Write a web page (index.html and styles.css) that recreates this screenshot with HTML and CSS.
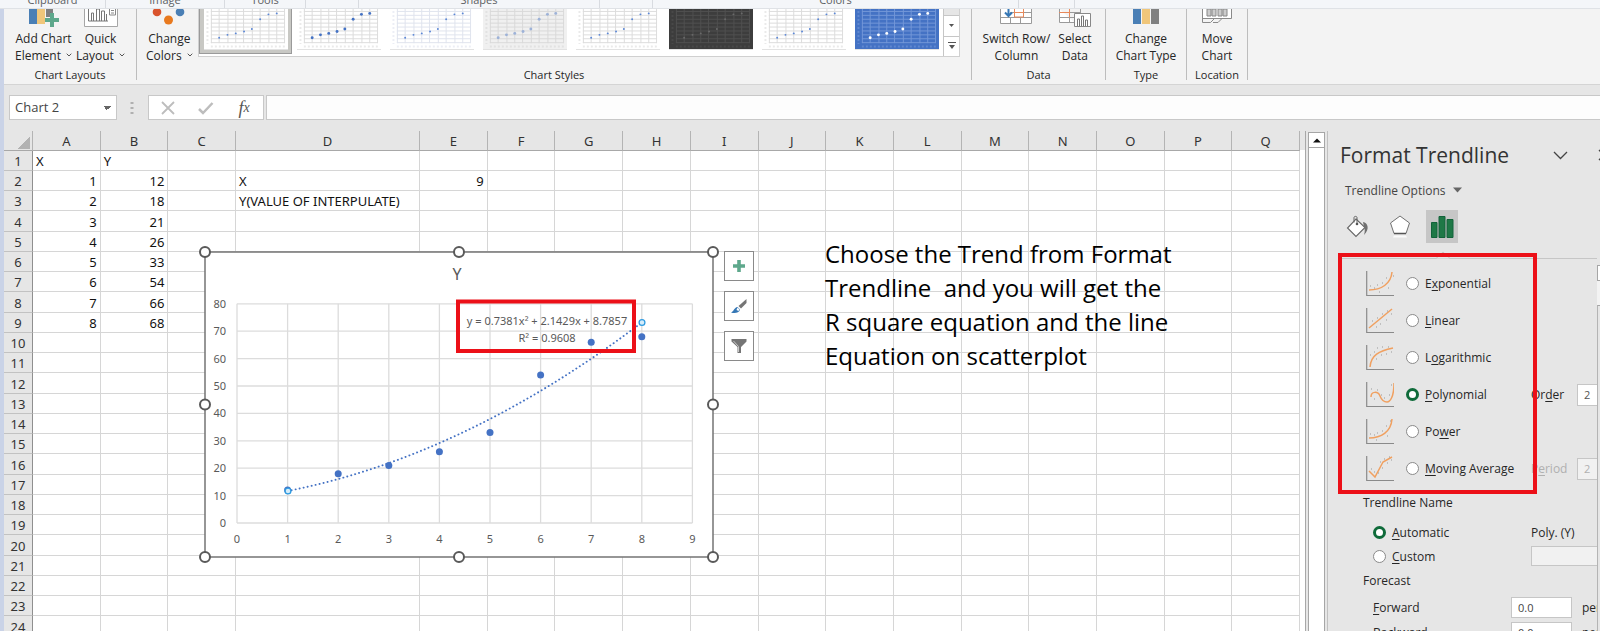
FILE: index.html
```html
<!DOCTYPE html>
<html lang="en">
<head>
<meta charset="utf-8">
<title>Chart 2 - Format Trendline</title>
<link rel="stylesheet" href="styles.css">
</head>
<body>
<svg class="defs" aria-hidden="true">
  <symbol id="thumb-grid" viewBox="0 0 84 41">
    <path d="M6.500 0V35M14.500 0V35M23.500 0V35M31.500 0V35M39.500 0V35M48.500 0V35M56.500 0V35M65.500 0V35M73.500 0V35M81.500 0V35M6 2.500H82M6 6.500H82M6 10.500H82M6 14.500H82M6 18.500H82M6 22.500H82M6 26.500H82M6 30.500H82M6 34.500H82" fill="none" stroke="currentColor"/>
    <path d="M2.500 2v34M6 38.500h76" fill="none" stroke="currentColor" stroke-width="2" stroke-dasharray="2 2.100" opacity=".6"/>
  </symbol>
  <symbol id="thumb-dots" viewBox="0 0 84 41">
    <g fill="currentColor"><circle cx="14.500" cy="29.500" r="1"/><circle cx="23" cy="26.500" r="1"/><circle cx="31.500" cy="25" r="1"/><circle cx="40" cy="23" r="1"/><circle cx="48" cy="20.500" r="1"/><circle cx="56.500" cy="10.500" r="1"/><circle cx="65" cy="5.500" r="1"/><circle cx="73.500" cy="4.500" r="1"/></g>
  </symbol>
  <symbol id="thumb-dots-bold" viewBox="0 0 84 41">
    <g fill="currentColor"><circle cx="14.500" cy="29.500" r="1.500"/><circle cx="23" cy="26.500" r="1.500"/><circle cx="31.500" cy="25" r="1.500"/><circle cx="40" cy="23" r="1.500"/><circle cx="48" cy="20.500" r="1.500"/><circle cx="56.500" cy="10.500" r="1.500"/><circle cx="65" cy="5.500" r="1.500"/><circle cx="73.500" cy="4.500" r="1.500"/></g>
  </symbol>
  <symbol id="axes" viewBox="0 0 28 27">
    <path d="M.7 1V25.500H28" fill="none" stroke="#8a8a8a" stroke-width="1.200"/>
  </symbol>
  <symbol id="caret" viewBox="0 0 6 4">
    <path d="M.7.7 3 3 5.300.7" fill="none" stroke="#555"/>
  </symbol>
</svg>

<div class="app">
  <div class="host-bar">
    <span class="w105">Clipboard</span><span class="w119">Image</span><span class="w81">Tools</span><span class="w53"></span><span class="w242">Shapes</span><span class="w53"></span><span class="w368">Colors</span><span class="w56"></span>
  </div>

  <div class="excel">
    <div class="ribbon">
      <section class="group g-layouts">
        <div class="tools">
          <button class="tool">
            <svg width="32" height="18" viewBox="0 0 32 18"><path d="M1 0h8v15H1z" fill="#4a7fb5"/><path d="M9 0h8v15H9z" fill="#f0c67a"/><path d="M18 0h7v4h-3v4h-4z" fill="#808080"/><path d="M22 4h4v5h5v4h-5v5h-4v-5h-5V9h5z" fill="#5ea88c"/></svg>
            <span>Add Chart<br>Element <svg class="caret"><use href="#caret"/></svg></span>
          </button>
          <button class="tool">
            <svg width="34" height="18" viewBox="0 0 34 18"><path d="M.5 0v17.500h33V0" fill="#fff" stroke="#a6a6a6"/><path d="M4.500 0v12H24M7.500 12V4h2v8M12.500 12V0h3v12M17.500 12V2h3v10M22.500 12V5" fill="none" stroke="#777"/><path d="M25.500 0v6h6V0M27 1.500h3M27 4h3" fill="none" stroke="#888"/></svg>
            <span>Quick<br>Layout <svg class="caret"><use href="#caret"/></svg></span>
          </button>
        </div>
        <h2>Chart Layouts</h2>
      </section>
      <section class="group g-styles">
        <div class="tools">
          <button class="tool">
            <svg width="34" height="18" viewBox="0 0 34 18"><circle cx="5" cy="3" r="4.300" fill="#d9532c"/><circle cx="28" cy="3" r="4.300" fill="#4a7fb5"/><circle cx="16.500" cy="11" r="4.500" fill="#e8791e"/></svg>
            <span>Change<br>Colors <svg class="caret"><use href="#caret"/></svg></span>
          </button>
          <div class="gallery">
            <button class="thumb selected" aria-label="Style 1"><svg><use href="#thumb-grid"/><use class="dots" href="#thumb-dots"/></svg></button>
            <button class="thumb bold" aria-label="Style 2"><svg><use href="#thumb-grid"/><use class="dots" href="#thumb-dots-bold"/></svg></button>
            <button class="thumb pale" aria-label="Style 3"><svg><use href="#thumb-grid"/><use class="dots" href="#thumb-dots"/></svg></button>
            <button class="thumb gray" aria-label="Style 4"><svg><use href="#thumb-grid"/><use class="dots" href="#thumb-dots-bold"/></svg></button>
            <button class="thumb" aria-label="Style 5"><svg><use href="#thumb-grid"/><use class="dots" href="#thumb-dots"/></svg></button>
            <button class="thumb dark" aria-label="Style 6"><svg><use href="#thumb-grid"/><use class="dots" href="#thumb-dots"/></svg></button>
            <button class="thumb" aria-label="Style 7"><svg><use href="#thumb-grid"/><use class="dots" href="#thumb-dots"/></svg></button>
            <button class="thumb blue" aria-label="Style 8"><svg><use href="#thumb-grid"/><use class="dots" href="#thumb-dots-bold"/></svg></button>
            <div class="gallery-nav">
              <button class="nav-up" aria-label="Scroll up"></button>
              <button aria-label="Scroll down"><svg width="7" height="4" viewBox="0 0 7 4"><path d="M1 0h5L3.500 3z" fill="#555"/></svg></button>
              <button aria-label="More styles"><svg width="8" height="8" viewBox="0 0 8 8"><path d="M0 .5h8" stroke="#555"/><path d="M1 3h6L4 7z" fill="#555"/></svg></button>
            </div>
          </div>
        </div>
        <h2>Chart Styles</h2>
      </section>
      <section class="group g-data">
        <div class="tools">
          <button class="tool">
            <svg width="32" height="18" viewBox="0 0 32 18"><path d="M.5 0v14.500h31V0M0 8.500h31M10.500 8v6M20.500 8v6M10 3.500h21" fill="#fff" stroke="#9a9a9a"/><path d="M14.500 0v8h9V0M14 3.500h10" fill="none" stroke="#e8895a"/><path d="M8.500 0v7M5 3.500l3.500 3.500L12 3.500" fill="none" stroke="#3577b5" stroke-width="2"/></svg>
            <span>Switch Row/<br>Column</span>
          </button>
          <button class="tool">
            <svg width="32" height="18" viewBox="0 0 32 18"><path d="M.5 0v13.500h15M0 3.500h22M0 8.500h15M10.500 0v13M21.500 0v4" fill="#fff" stroke="#9a9a9a"/><path d="M10.500 0v8.500M0 3.500h10" stroke="#e8895a"/><path d="M15.500 4.500h16v13h-16z" fill="#fff" stroke="#888"/><path d="M18.500 17V10h2v7M22.500 17V7h2v10M26.500 17v-6h2v6" fill="none" stroke="#777"/></svg>
            <span>Select<br>Data</span>
          </button>
        </div>
        <h2>Data</h2>
      </section>
      <section class="group g-type">
        <div class="tools">
          <button class="tool">
            <svg width="28" height="18" viewBox="0 0 28 18"><path d="M1 0h8v15H1z" fill="#4a7fb5"/><path d="M10 0h8v15h-8z" fill="#f0c67a"/><path d="M19 0h8v15h-8z" fill="#808080"/></svg>
            <span>Change<br>Chart Type</span>
          </button>
        </div>
        <h2>Type</h2>
      </section>
      <section class="group g-location">
        <div class="tools">
          <button class="tool">
            <svg width="32" height="18" viewBox="0 0 32 18"><path d="M1.500 0v9.500h29V0" fill="#fff" stroke="#8a8a8a"/><path d="M6 0h4v7H6zM11 0h4v7h-4zM17 0h4v7h-4zM22 0h4v7h-4z" fill="#ccc" stroke="#888"/><path d="M1.500 9v4.500h8l4-4M12 13.500h5l4-4" fill="none" stroke="#8a8a8a"/></svg>
            <span>Move<br>Chart</span>
          </button>
        </div>
        <h2>Location</h2>
      </section>
    </div>

    <div class="formula-bar">
      <select class="name-box" aria-label="Name box"><option>Chart 2</option></select>
      <svg class="grip" width="4" height="14" viewBox="0 0 4 14"><path d="M.5 1h3v2h-3zM.5 6h3v2h-3zM.5 11h3v2h-3z" fill="#b0b0b0"/></svg>
      <div class="fx-box">
        <button aria-label="Cancel"><svg width="14" height="14" viewBox="0 0 14 14"><path d="M1 1l12 12M13 1 1 13" stroke="#bdbdbd" stroke-width="1.800"/></svg></button>
        <button aria-label="Enter"><svg width="16" height="14" viewBox="0 0 16 14"><path d="M1 8l4 4L14.500 2" fill="none" stroke="#bdbdbd" stroke-width="2.500"/></svg></button>
        <button class="fx" aria-label="Insert function">f<sub>x</sub></button>
      </div>
      <input class="formula" type="text" aria-label="Formula">
    </div>

    <div class="work">
      <main class="sheet">
        <table class="grid">
          <colgroup><col class="c-head"><col><col><col><col class="c-wide"><col><col><col><col><col><col><col><col><col><col><col><col><col></colgroup>
          <thead><tr id="heads"></tr></thead>
          <tbody id="rows"></tbody>
        </table>

        <div class="chart">
          <svg class="plot" width="508" height="305" viewBox="0 0 508 305" role="img" aria-label="Scatter chart of Y with polynomial trendline">
            <path d="M0 0H508V305H0z" fill="#fff" stroke="#747474" stroke-width="1.500"/>
            <g id="gridlines" stroke="#dcdcdc" stroke-width="1.300"></g>
            <text class="chart-title" x="252" y="28">Y</text>
            <g id="labels" class="axis"></g>
            <path d="M82.600 239Q259.700 204.300 436.800 70.500" fill="none" stroke="#4472c4" stroke-width="1.900" stroke-linecap="round" stroke-dasharray=".1 4"/>
            <g id="points" fill="#4472c4"></g>
            <g fill="#d5ecfa" stroke="#2f9be0" stroke-width="1.300"><circle cx="83" cy="239" r="2.900"/><circle cx="437" cy="70.500" r="2.900"/></g>
            <text class="eq" x="342" y="73">y = 0.7381x² + 2.1429x + 8.7857</text>
            <text class="eq" x="342" y="90">R² = 0.9608</text>
            <path d="M253 49.500H429V99H253z" fill="none" stroke="#ec1018" stroke-width="4"/>
            <g fill="#fff" stroke="#595959" stroke-width="2"><circle cx="0" cy="0" r="5"/><circle cx="254" cy="0" r="5"/><circle cx="508" cy="0" r="5"/><circle cx="0" cy="152.500" r="5"/><circle cx="508" cy="152.500" r="5"/><circle cx="0" cy="305" r="5"/><circle cx="254" cy="305" r="5"/><circle cx="508" cy="305" r="5"/></g>
          </svg>
          <div class="chart-tools">
            <button aria-label="Chart Elements"><svg width="14" height="14" viewBox="0 0 14 14"><path d="M5.200 1h3.600v4.200H13v3.600H8.800V13H5.200V8.800H1V5.200h4.200z" fill="#5ea88c"/></svg></button>
            <button aria-label="Chart Styles"><svg width="16" height="16" viewBox="0 0 16 16"><path d="M15.500 1v4L10 10.500 7.500 8z" fill="#757575"/><path d="M0 14.500c3-1 3-5 6.500-5.500l2.500 2.500c-1 4-6 4-9 3z" fill="#3577b5"/><path d="M6.500 9.500l2 2-1 1.500-2-1z" fill="#fff"/></svg></button>
            <button aria-label="Chart Filters"><svg width="16" height="16" viewBox="0 0 16 16"><path d="M.5 1h15v2.500L10 9v6H6.500V9L.5 3.500z" fill="#757575"/><path d="M2.500 3l5 5.500V14" fill="none" stroke="#c8c8c8"/></svg></button>
          </div>
        </div>

        <p class="note">Choose the Trend from Format<br>Trendline&nbsp; and you will get the<br>R square equation and the line<br>Equation on scatterplot</p>
      </main>

      <div class="scrollbar"><button aria-label="Scroll up"><svg width="8" height="5" viewBox="0 0 8 5"><path d="M0 4.500 4 .5l4 4z" fill="#111"/></svg></button></div>

      <aside class="pane">
        <header class="pane-head">
          <h1>Format Trendline</h1>
          <button aria-label="Pane options"><svg width="15" height="9" viewBox="0 0 15 9"><path d="M1 1l6.500 6.500L14 1" fill="none" stroke="#444" stroke-width="1.300"/></svg></button>
          <button class="close" aria-label="Close"><svg width="12" height="12" viewBox="0 0 12 12"><path d="M1 1l10 10M11 1 1 11" stroke="#444" stroke-width="1.300"/></svg></button>
        </header>
        <div class="pane-body">
        <div class="pane-main">
          <button class="options-menu">Trendline Options <svg width="9" height="6" viewBox="0 0 9 6"><path d="M0 .5h9L4.500 5.500z" fill="#666"/></svg></button>
          <nav class="tabs">
            <button aria-label="Fill and line"><svg width="24" height="24" viewBox="0 0 24 24"><path d="M10 4 19 12.500 10 21.500 1.500 13z" fill="#fff" stroke="#666" stroke-width="1.100"/><path d="M8 7.500V2.500C8 1 11 1 11 2.500V9" fill="none" stroke="#666"/><circle cx="11" cy="9" r="1.300" fill="#555"/><path d="M17 7c5 1 7 7 1 13 1-3 1-6 0-8z" fill="#707070"/></svg></button>
            <button aria-label="Effects"><svg width="22" height="24" viewBox="0 0 22 24"><path d="M11 1 20.500 8 17 18.500H5L1.500 8z" fill="#fff" stroke="#707070"/><path d="M5 18.500h12" stroke="#555" stroke-width="1.500"/><path d="M4 22.500h14l-1-2H5z" fill="#fafafa"/></svg></button>
            <button class="active" aria-label="Trendline options"><svg width="24" height="24" viewBox="0 0 24 24"><path d="M1.500 7.500h5.500v15H1.500zM9 1.500h6v21H9zM17 4.500h6v18h-6z" fill="#1e7846" stroke="#12633a"/></svg></button>
          </nav>
          <form class="options">
            <svg class="notch" width="14" height="8" viewBox="0 0 14 8"><path d="M0 7.500 7 1l7 6.500" fill="#e6e6e6" stroke="#c6c6c6"/></svg>
            <div class="kind"><svg><use href="#axes"/><path class="curve" d="M3 20C15 20 25 14 26 2"/><path class="specks" d="M4 16h1M8 18h1M11 15h1M16 13h1M20 8h1M27 6h1M13 22h1M22 18h1"/></svg><label><input type="radio" name="kind">E<u>x</u>ponential</label></div>
            <div class="kind"><svg><use href="#axes"/><path class="curve" d="M3 21 26 2"/><path class="specks" d="M6 14h1M11 11h1M16 7h1M21 4h1M10 20h1M14 17h1M20 13h1M25 7h1"/></svg><label><input type="radio" name="kind"><u>L</u>inear</label></div>
            <div class="kind"><svg><use href="#axes"/><path class="curve" d="M4 23C5 11 13 7 27 4"/><path class="specks" d="M4 11h1M8 8h1M11 4h1M16 3h1M22 3h1M10 15h1M15 11h1M20 10h1M25 8h1"/></svg><label><input type="radio" name="kind">L<u>o</u>garithmic</label></div>
            <div class="kind"><svg><use href="#axes"/><path class="curve" d="M5 16C5 10 12 10 14 15S18 21 21 21 28 16 28 2"/><path class="specks" d="M5 8h1M11 9h1M15 14h1M25 4h1M8 18h1M23 14h1M18 17h1"/></svg><label><input type="radio" name="kind" checked><u>P</u>olynomial</label><label for="order">Or<u>d</u>er</label><input class="num" id="order" value="2"></div>
            <div class="kind"><svg><use href="#axes"/><path class="curve" d="M3 20C15 20 25 14 26 1"/><path class="specks" d="M4 16h1M8 17h1M11 15h1M16 13h1M20 8h1M24 3h1M10 22h1M21 18h1"/></svg><label><input type="radio" name="kind">Po<u>w</u>er</label></div>
            <div class="kind"><svg><use href="#axes"/><path class="curve" d="M3 16 9 22 17 7 26 2"/><path class="specks" d="M5 14h1M8 17h1M14 7h1M18 4h1M23 2h1M12 18h1M16 13h1M21 8h1M25 5h1"/></svg><label><input type="radio" name="kind"><u>M</u>oving Average</label><label class="off" for="period">P<u>e</u>riod</label><input class="num" id="period" value="2" disabled></div>

            <h3>Trendline Name</h3>
            <div class="name auto"><label><input type="radio" name="tname" checked><u>A</u>utomatic</label><output>Poly. (Y)</output></div>
            <div class="name"><label><input type="radio" name="tname"><u>C</u>ustom</label><input type="text" aria-label="Custom name" disabled></div>
            <h3 class="forecast">Forecast</h3>
            <div class="cast"><label for="fwd"><u>F</u>orward</label><input id="fwd" value="0.0"><span>periods</span></div>
            <div class="cast"><label for="bwd"><u>B</u>ackward</label><input id="bwd" value="0.0"><span>periods</span></div>
          </form>
          <div class="highlight"></div>
        </div>
        <div class="pane-scroll"><span class="arrow"></span><span class="thumb-bar"></span><span class="track"></span></div>
        </div>
      </aside>
    </div>
  </div>
</div>
<script src="script.js"></script>
</body>
</html>
```
FILE: styles.css
```css
* { box-sizing: border-box; }
body { margin: 0; background: #fff; color: #262626; font: 12px/17px "Open Sans", "Noto Sans", sans-serif; overflow: hidden; }
button, input, select { font: inherit; color: inherit; margin: 0; padding: 0; border: 0; background: none; border-radius: 0; }
button { display: flex; align-items: center; justify-content: center; }
h1, h2, h3, p { margin: 0; font-weight: 400; }
svg { display: block; flex: none; }
.defs { position: absolute; width: 0; height: 0; }

.app { height: calc(100vh - 4px); display: flex; flex-direction: column; overflow: hidden; }

.host-bar { flex: none; height: 9px; display: flex; align-items: flex-end; overflow: hidden; background: #f4f6f9; border-bottom: 1px solid #dfe2e6; color: #5c5f63; font-size: 11px; line-height: 16px; text-align: center; }
.host-bar span { flex: none; height: 16px; border-right: 1px solid #d8dbe0; }
.w105 { width: 106px; }
.w119 { width: 119px; }
.w81 { width: 81px; }
.w53 { width: 53px; }
.w242 { width: 241px; }
.w368 { width: 366px; }
.w56 { width: 56px; }

.excel { flex: 1; min-height: 0; display: flex; flex-direction: column; border-left: 4px solid #cad3e7; background: #e6e6e6; }

.ribbon { flex: none; height: 76px; display: flex; background: #f3f3f3; border-bottom: 1px solid #d4d4d4; }
.group { display: flex; flex-direction: column; height: 71px; border-right: 1px solid #bdbdbd; }
.group h2 { font-size: 11px; line-height: 10px; text-align: center; }
.tools { flex: 1; display: flex; justify-content: center; align-items: flex-start; }
.tool { flex-direction: column; justify-content: flex-start; gap: 3px; line-height: 17px; white-space: nowrap; }
.caret { display: inline-block; width: 6px; height: 4px; margin: 0 0 3px 2px; }
.g-layouts { width: 133px; }
.g-layouts .tools { gap: 4px; }
.g-styles { width: 835px; }
.g-styles .tools { justify-content: flex-start; padding-left: 9px; gap: 3px; }
.g-data { width: 134px; }
.g-data .tools { gap: 8px; padding-right: 3px; }
.g-type { width: 81px; }
.g-location { width: 61px; }

.gallery { display: flex; margin-left: auto; margin-right: 11px; height: 48px; background: #fff; border: 1px solid #d0d0d0; border-top: 0; }
.thumb { width: 93px; height: 45px; align-items: flex-start; }
.thumb svg { width: 84px; height: 41px; background: #fff; color: #dcdcdc; border-bottom: 1px solid #e2e2e2; }
.thumb .dots { color: #5b87d6; }
.thumb.selected { background: #c8c8c4; border: 1px solid #9a9a9a; border-top: 0; }
.thumb.pale svg { color: #dfe3ee; }
.thumb.gray svg { background: #f0f0f0; color: #d9d9d9; }
.thumb.gray .dots { color: #9db2d8; }
.thumb.dark svg { background: #3d3d3d; color: #505050; }
.thumb.dark .dots { color: #6a6a6a; }
.thumb.blue svg { background: #4472c4; color: #7397d8; }
.thumb.blue .dots { color: #fff; }
.thumb.bold .dots { color: #4472c4; }
.gallery-nav { display: flex; flex-direction: column; width: 16px; border-left: 1px solid #c6c6c6; }
.gallery-nav button { flex: 1; border-bottom: 1px solid #c6c6c6; }
.gallery-nav button:last-child { border-bottom: 0; }
.gallery-nav .nav-up { flex: none; height: 7px; background: #e6e6e6; }

.formula-bar { flex: none; height: 46px; padding: 10px 0 11px 5px; display: flex; align-items: stretch; }
.name-box { appearance: none; width: 108px; padding: 0 5px; border: 1px solid #c8c8c8; font-size: 13px; background: linear-gradient(to bottom left, transparent 50%, #666 50%) 93px 11px / 3px 3px no-repeat, linear-gradient(to bottom right, transparent 50%, #666 50%) 96px 11px / 3px 3px no-repeat, #fff; color: #444; }
.name-box { background: conic-gradient(from -45deg at 50% 100%, #666 90deg, transparent 0) 93px 10px / 8px 4px no-repeat, #fff; }
.grip { align-self: center; margin: 0 14px 0 13px; }
.fx-box { display: flex; width: 116px; border: 1px solid #c8c8c8; background: #fff; }
.fx-box button { flex: 1; }
.fx { font: italic 18px/20px "Liberation Serif", serif; color: #555; }
.fx sub { font-size: 14px; line-height: 10px; }
.formula { flex: 1; margin-left: 2px; border: 1px solid #c8c8c8; border-right: 0; background: #fdfdfd; }

.work { flex: 1; min-height: 0; display: flex; }
.sheet { flex: 1; min-width: 0; position: relative; overflow: hidden; padding-right: 5px; background: linear-gradient(#e6e6e6 19px, #fff 19px); border-right: 1px solid #a8a8a8; }
.grid { width: 100%; table-layout: fixed; border-collapse: separate; border-spacing: 0; font-family: "Noto Sans", "Open Sans", sans-serif; font-size: 13px; line-height: 18px; color: #111; }
.c-head { width: 29px; }
.c-wide { width: 184px; }
.grid tr { height: 20px; }
.grid tbody tr:nth-child(4n) { height: 21px; }
.grid th { padding: 1px 0 0; font-weight: 400; text-align: center; background: #e6e6e6; color: #333; border-bottom: 1px solid #c2c2c2; border-right: 1px solid #8f8f8f; }
.grid thead th { border-right-color: #b4b4b4; border-bottom-color: #a8a8a8; }
.grid td { padding: 1px 3px 0; white-space: nowrap; border-right: 1px solid #d6d6d6; border-bottom: 1px solid #d6d6d6; }
.grid td.n { text-align: right; }
.corner { display: block; width: 13px; height: 13px; margin: 2px 2px 0 auto; background: linear-gradient(to bottom right, transparent 50%, #b2b2b2 50%); }

.chart { position: absolute; left: 201px; top: 121px; display: flex; gap: 11px; }
.plot { overflow: visible; }
.plot text { font-family: "Noto Sans", "Open Sans", sans-serif; fill: #595959; text-anchor: middle; }
.plot .chart-title { font-size: 16px; }
.axis text, .plot .eq { font-size: 11px; }
.plot .axis .v { text-anchor: end; }
.chart-tools { display: flex; flex-direction: column; gap: 10px; margin-top: -1px; }
.chart-tools button { width: 30px; height: 30px; background: #fff; border: 1px solid #8a8a8a; }

.note { position: absolute; left: 821px; top: 106px; font-size: 24px; line-height: 34px; color: #000; white-space: nowrap; }

.scrollbar { flex: none; width: 17px; margin: 1px 2px 0; background: #fff; border: solid #a6a6a6; border-width: 0 1px; }
.scrollbar button { width: 100%; height: 16px; border: solid #a6a6a6; border-width: 1px 0; }

.pane { flex: none; width: 273px; display: flex; flex-direction: column; overflow: hidden; border-left: 1px solid #c0c0c0; }
.pane-body { flex: 1; min-height: 0; display: flex; }
.pane-main { flex: 1; min-width: 0; overflow: hidden; position: relative; display: flex; flex-direction: column; }
.pane-head { flex: none; display: flex; align-items: center; height: 48px; padding-left: 12px; }
.pane-head h1 { flex: none; font-size: 21px; line-height: 28px; width: 213px; color: #333; }
.pane-head button { flex: none; }
.pane-head .close { margin-left: 30px; }
.options-menu { flex: none; align-self: flex-start; gap: 7px; height: 22px; padding-left: 17px; color: #444; }
.tabs { flex: none; display: flex; height: 57px; padding: 9px 0 0 14px; gap: 10px; align-items: flex-start; }
.tabs button { width: 32px; height: 33px; }
.tabs .active { background: #c6c6c6; }
.options { flex: none; position: relative; width: 320px; margin-left: 10px; padding: 6px 0 0 28px; border-top: 1px solid #c6c6c6; }
.notch { position: absolute; left: 98px; top: -8px; }
.kind { display: grid; grid-template-columns: 40px 125px 46px 60px; align-items: center; height: 37px; }
.kind svg { width: 28px; height: 27px; }
.curve { fill: none; stroke: #f0a060; stroke-width: 1.5; }
.specks { fill: none; stroke: #999; }
label { display: flex; align-items: center; white-space: pre; }
u { text-underline-offset: 2px; }
input[type="radio"] { appearance: none; flex: none; width: 13px; height: 13px; margin-right: 6px; border: 1px solid #8a8a8a; border-radius: 50%; background: #fff; }
input[type="radio"]:checked { border: 3px solid #0f6b3a; }
.off { color: #b0b0b0; }
.num { height: 22px; padding-left: 6px; border: 1px solid #c6c6c6; background: #fff; font-size: 11px; color: #555; }
input:disabled { background: #f1f1f1; color: #b0b0b0; }
.options h3 { font-size: 12px; line-height: 32px; margin-left: -3px; }
.options .forecast { line-height: 28px; }
.name { display: grid; grid-template-columns: 158px 90px; align-items: center; height: 22px; padding-left: 7px; }
.name.auto { height: 26px; }
.name input[type="text"] { height: 20px; border: 1px solid #c6c6c6; }
.cast { display: grid; grid-template-columns: 138px 61px 60px; align-items: center; height: 25px; padding-left: 7px; }
.cast input { height: 21px; padding-left: 6px; border: 1px solid #c6c6c6; background: #fff; font-size: 11px; color: #444; }
.cast span { padding-left: 10px; }
.highlight { position: absolute; left: 10px; top: 74px; width: 199px; height: 241px; border: 4px solid #ec1018; pointer-events: none; }

.pane-scroll { flex: none; width: 3px; margin-top: 86px; display: flex; flex-direction: column; }
.pane-scroll .arrow { height: 16px; background: #fff; border: 1px solid #a6a6a6; border-right: 0; }
.pane-scroll .thumb-bar { height: 24px; background: #f3f3f3; }
.pane-scroll .track { flex: 1; border-left: 1px solid #b4b4b4; border-top: 1px solid #a6a6a6; }
```
FILE: script.js
```js
const xs = [1, 2, 3, 4, 5, 6, 7, 8];
const ys = [12, 18, 21, 26, 33, 54, 66, 68];
const columns = 'ABCDEFGHIJKLMNOPQ'.split('');

const cells = { A1: 'X', B1: 'Y', D2: 'X', E2: 9, D3: 'Y(VALUE OF INTERPULATE)' };
xs.forEach((x, i) => {
  cells['A' + (i + 2)] = x;
  cells['B' + (i + 2)] = ys[i];
});

document.getElementById('heads').innerHTML =
  '<th><span class="corner"></span></th>' +
  columns.map(c => `<th scope="col">${c}</th>`).join('');

let body = '';
for (let r = 1; r <= 24; r++) {
  body += `<tr><th scope="row">${r}</th>`;
  for (const c of columns) {
    const v = cells[c + r];
    body += `<td${typeof v === 'number' ? ' class="n"' : ''}>${v ?? ''}</td>`;
  }
  body += '</tr>';
}
document.getElementById('rows').innerHTML = body;

const px = x => 32 + 50.6 * x;
const py = y => 271 - 2.74 * y;
let lines = '';
let labels = '';
for (let x = 0; x <= 9; x++) {
  lines += `<path d="M${px(x)} ${py(80)}V${py(0)}"/>`;
  labels += `<text x="${px(x)}" y="291">${x}</text>`;
}
for (let y = 0; y <= 80; y += 10) {
  lines += `<path d="M${px(0)} ${py(y)}H${px(9)}"/>`;
  labels += `<text class="v" x="21" y="${py(y) + 4}">${y}</text>`;
}
document.getElementById('gridlines').innerHTML = lines;
document.getElementById('labels').innerHTML = labels;
document.getElementById('points').innerHTML =
  xs.map((x, i) => `<circle cx="${px(x)}" cy="${py(ys[i])}" r="3.5"/>`).join('');
```
